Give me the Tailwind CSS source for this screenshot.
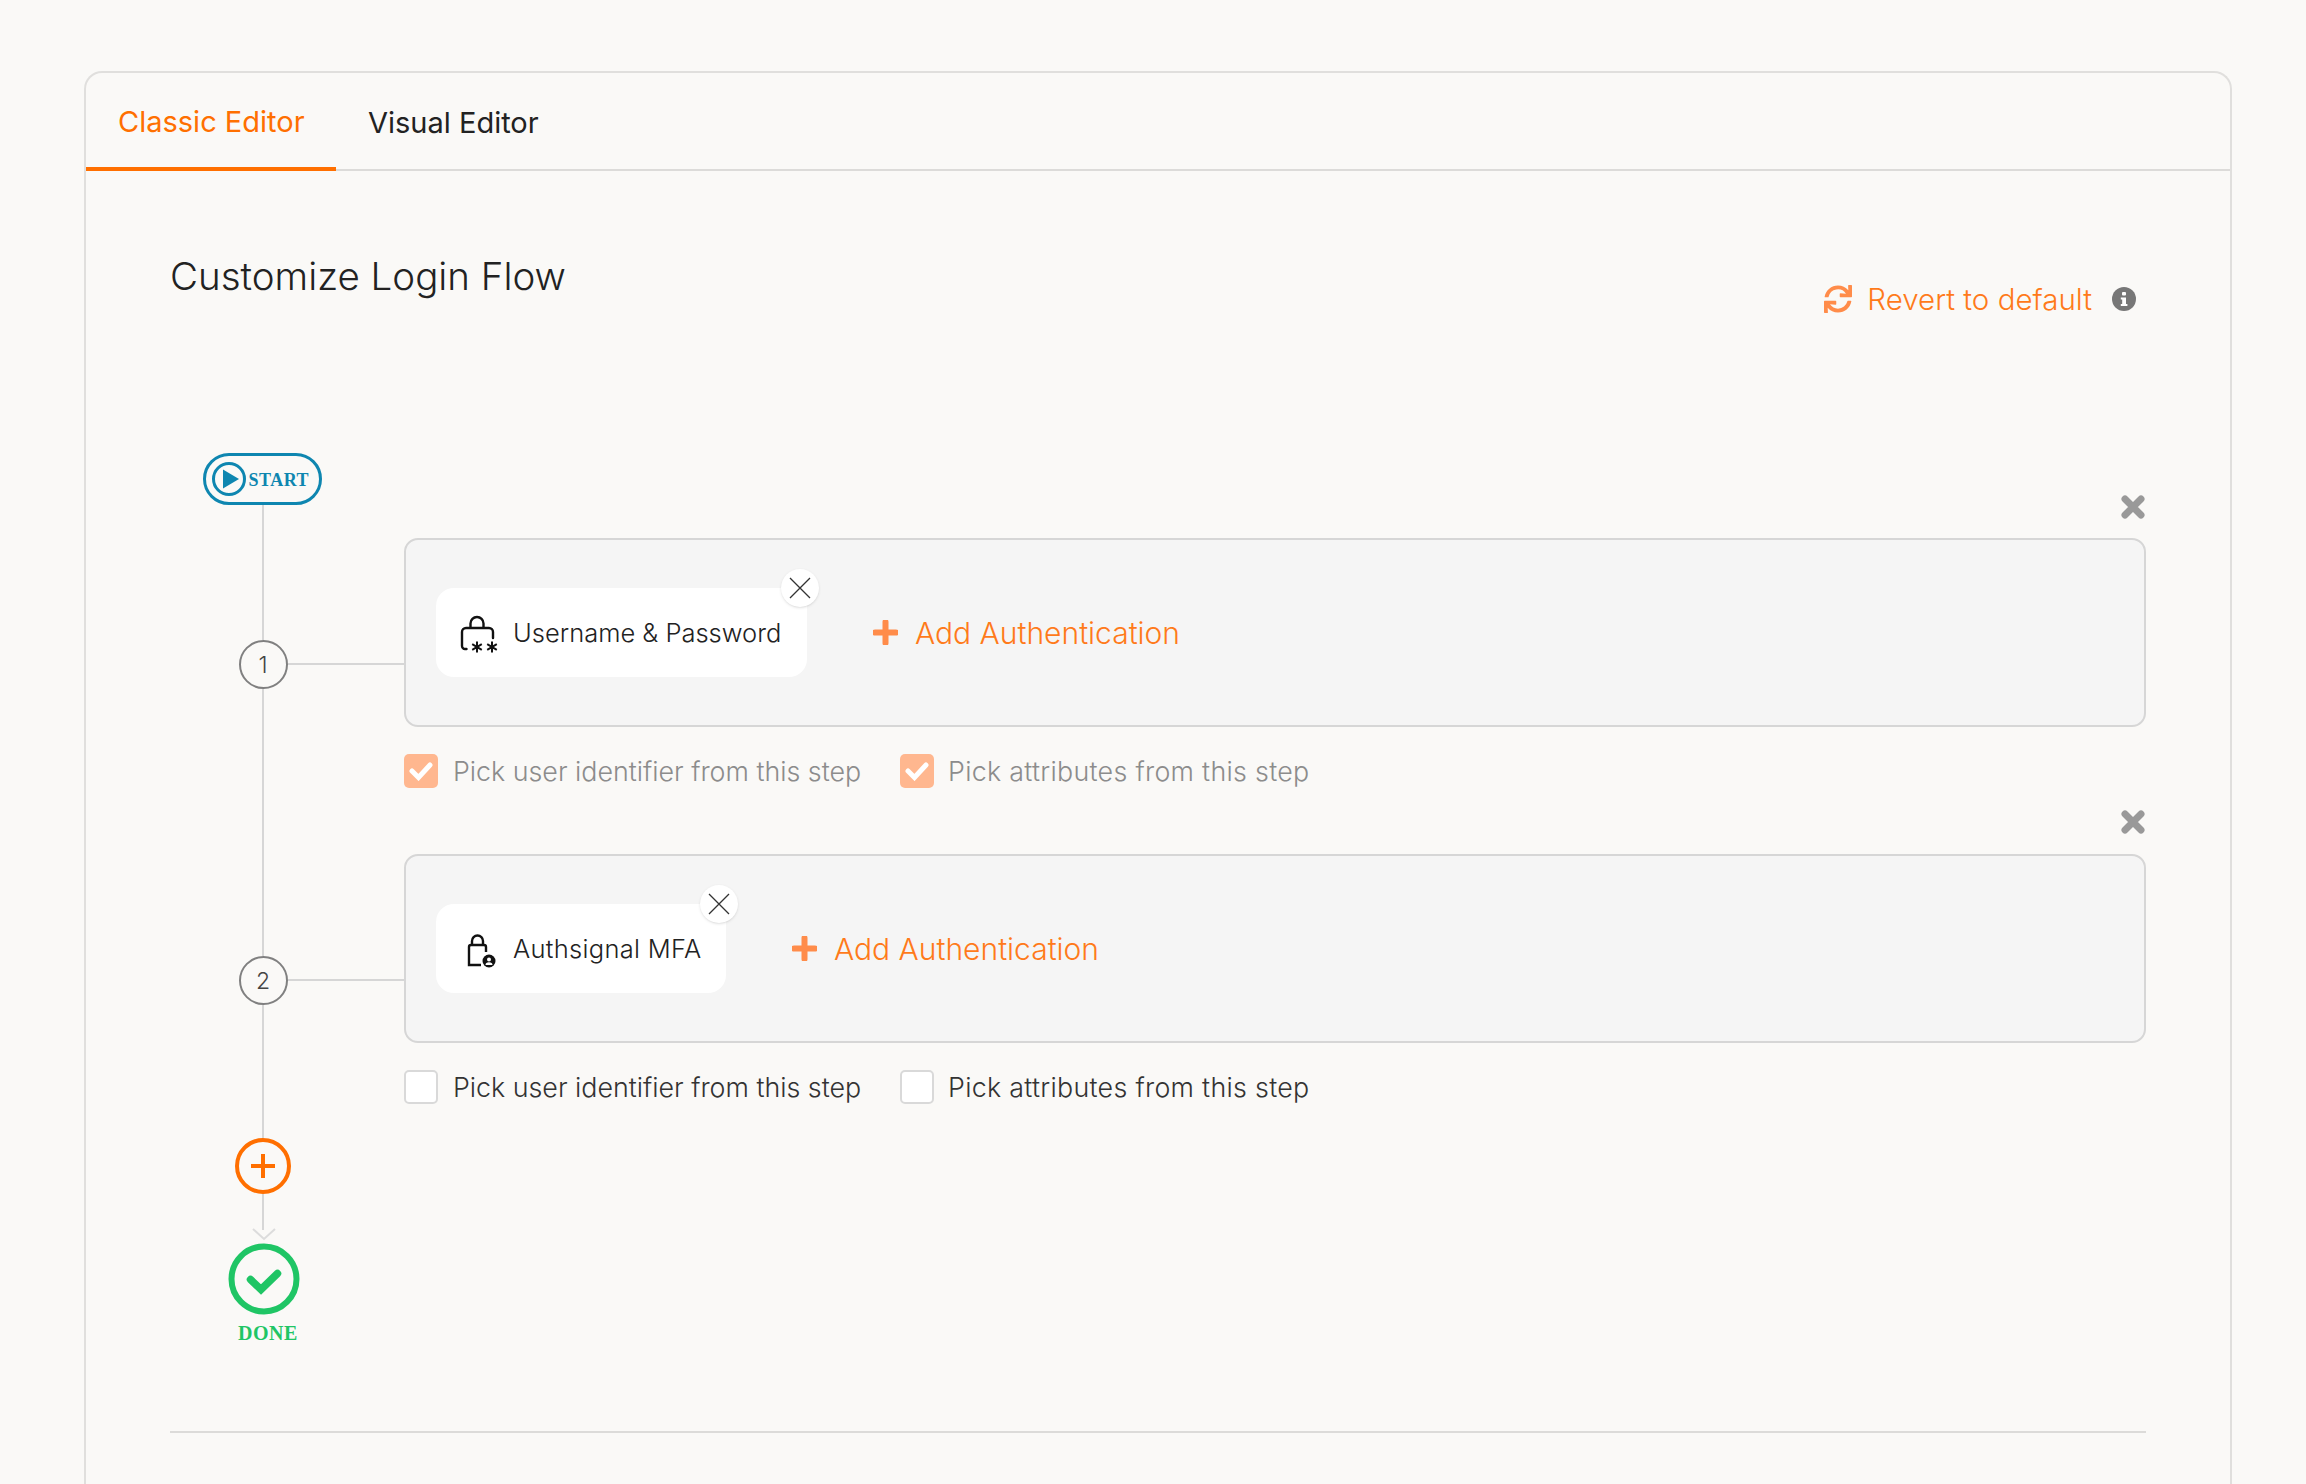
<!DOCTYPE html>
<html lang="en">
<head>
<meta charset="UTF-8">
<title>Customize Login Flow</title>
<script src="https://cdn.jsdelivr.net/npm/@tailwindcss/browser@4"></script>
</head>
<body class="bg-[#faf9f7] h-[1484px] overflow-hidden font-['Inter',sans-serif] font-light text-[#222]">

<div class="ml-[84px] mt-[71px] w-[2148px] h-[1413px] border-2 border-b-0 border-[#e0dfdd] rounded-t-[18px]">

  <!-- tabs -->
  <div class="flex h-[98px] border-b-2 border-[#dcdbd9] text-[29px] font-normal">
    <div class="w-[250px] h-[98px] pl-[32px] pt-[4px] flex items-center text-[#ff6f00] border-b-4 border-[#ff6f00]">Classic Editor</div>
    <div class="pl-[32px] pt-[2px] flex items-center h-[98px]">Visual Editor</div>
  </div>

  <div class="px-[84px]">
    <div class="flex justify-between items-start pt-[80px] h-[282px]">
      <h1 class="text-[38.5px] leading-[50px]">Customize Login Flow</h1>
      <div class="flex items-center text-[#ff7a1a] text-[29.5px] mr-[10px] mt-[26px]">
        <svg class="w-[28px] h-[28px] fill-[#ff8c4a]" viewBox="0 0 512 512"><path d="M440.65 12.57l4 82.77A247.16 247.16 0 0 0 255.83 8C134.73 8 33.91 94.92 12.29 209.82A12 12 0 0 0 24.09 224h49.05a12 12 0 0 0 11.67-9.26 175.91 175.91 0 0 1 317-56.94l-101.46-4.86a12 12 0 0 0-12.57 12v47.41a12 12 0 0 0 12 12H500a12 12 0 0 0 12-12V12a12 12 0 0 0-12-12h-47.37a12 12 0 0 0-11.98 12.57zM255.83 432a175.61 175.61 0 0 1-146-77.8l101.8 4.87a12 12 0 0 0 12.57-12v-47.4a12 12 0 0 0-12-12H12a12 12 0 0 0-12 12V500a12 12 0 0 0 12 12h47.35a12 12 0 0 0 12-12.6l-4.15-82.57A247.17 247.17 0 0 0 255.83 504c121.11 0 221.93-86.92 243.55-201.82a12 12 0 0 0-11.8-14.18h-49.05a12 12 0 0 0-11.67 9.26A175.86 175.86 0 0 1 255.83 432z"/></svg>
        <span class="ml-[15px]">Revert to default</span>
        <svg class="w-[24px] h-[24px] ml-[20px]" viewBox="0 0 24 24"><circle cx="12" cy="12" r="12" fill="#777"/><rect x="10" y="5" width="4" height="3.6" rx="1" fill="#fff"/><path d="M8.8 10.5h5.2v6.5h1.4v2H8.8v-2h1.4v-4.5H8.8z" fill="#fff"/></svg>
      </div>
    </div>

    <div class="flex h-[980px] border-b-2 border-[#dcdbd9]">
      <!-- timeline -->
      <div class="w-[234px] shrink-0">
        <div class="w-[186px] flex flex-col items-center">
          <div class="w-[119px] h-[52px] mr-[2px] rounded-full border-[3px] border-[#0e86b0] flex items-center pl-[5px] text-[#0e86b0]">
            <svg class="w-[36px] h-[36px]" viewBox="0 0 36 36"><circle cx="18" cy="18" r="15.5" fill="none" stroke="#0e86b0" stroke-width="3"/><path d="M12 8.500 28 18 12 27.500z" fill="#0e86b0"/></svg>
            <span class="font-['Liberation_Serif',serif] font-bold text-[18px] tracking-[0.5px] ml-[2px] pt-[2px]">START</span>
          </div>
          <div class="w-[2px] h-[135px] bg-[#d6d6d6]"></div>
          <div class="relative w-[49px] h-[49px] rounded-full border-2 border-[#808080] bg-[#faf9f7] flex items-center justify-center pt-[2px] text-[23px] text-[#444]">
            1
            <div class="absolute left-[47px] top-[21px] w-[118px] h-[2px] bg-[#d6d6d6]"></div>
          </div>
          <div class="w-[2px] h-[267px] bg-[#d6d6d6]"></div>
          <div class="relative w-[49px] h-[49px] rounded-full border-2 border-[#808080] bg-[#faf9f7] flex items-center justify-center pt-[2px] text-[23px] text-[#444]">
            2
            <div class="absolute left-[47px] top-[21px] w-[118px] h-[2px] bg-[#d6d6d6]"></div>
          </div>
          <div class="w-[2px] h-[133px] bg-[#d6d6d6]"></div>
          <svg class="w-[56px] h-[56px]" viewBox="0 0 56 56"><circle cx="28" cy="28" r="26" fill="none" stroke="#ff6f00" stroke-width="4"/><path d="M28 16v24M16 28h24" stroke="#ff6f00" stroke-width="4"/></svg>
          <div class="w-[2px] h-[36px] bg-[#d6d6d6]"></div>
          <svg class="w-[24px] h-[13px] -mt-[2px] ml-[1px]" viewBox="0 0 24 13"><path d="M1 1l11 10L23 1" fill="none" stroke="#dcdcdc" stroke-width="2"/></svg>
          <svg class="w-[72px] h-[72px] mt-[2px] ml-[2px]" viewBox="0 0 72 72"><circle cx="36" cy="36" r="32.5" fill="none" stroke="#1fc565" stroke-width="6"/><path d="M22.500 36.500l10.500 10 16.500-16" fill="none" stroke="#1fc565" stroke-width="7.500" stroke-linecap="round"/></svg>
          <div class="font-['Liberation_Serif',serif] font-bold text-[20px] tracking-[0.5px] text-[#1fc565] mt-[6px] ml-[10px] leading-[24px]">DONE</div>
        </div>
      </div>

      <!-- steps -->
      <div class="flex-1">
        <div class="h-[85px] pt-[42px] flex justify-end pr-[1px]">
          <svg class="w-[24px] h-[24px]" viewBox="0 0 24 24"><path d="M4 4l16 16M20 4L4 20" stroke="#999" stroke-width="7" stroke-linecap="round"/></svg>
        </div>
        <div class="h-[189px] rounded-[14px] border-2 border-[#d6d6d6] bg-[#f5f5f5] flex items-center pl-[30px]">
          <div class="relative h-[89px] w-[371px] bg-white rounded-[18px] flex items-center pl-[25px] text-[25.5px]">
            <svg class="w-[36px] h-[38px] mt-[4px] shrink-0 overflow-visible" viewBox="0 0 36 38"><path d="M9.500 12V7.500a6.500 6.500 0 0 1 13 0V12" fill="none" stroke="#111" stroke-width="2.400"/><path d="M5.500 33H4a3 3 0 0 1-3-3V16a4 4 0 0 1 4-4h23a4 4 0 0 1 4 4v6" fill="none" stroke="#111" stroke-width="2.400" stroke-linecap="round"/><path d="M16 25.500v11M11.200 28.200l9.600 5.600M20.800 28.200l-9.600 5.600M31 25.500v11M26.200 28.200l9.600 5.600M35.800 28.200l-9.600 5.600" stroke="#111" stroke-width="2"/></svg>
            <span class="ml-[16px] pt-[2px]">Username &amp; Password</span>
            <div class="absolute -top-[19px] -right-[12px] w-[38px] h-[38px] rounded-full bg-white shadow-sm flex items-center justify-center">
              <svg class="w-[22px] h-[22px]" viewBox="0 0 22 22"><path d="M1 1l20 20M21 1L1 21" stroke="#333" stroke-width="1.300"/></svg>
            </div>
          </div>
          <div class="flex items-center ml-[66px] text-[#ff7a1a] text-[30px]">
            <svg class="w-[25px] h-[25px]" viewBox="0 0 25 25"><path d="M12.500 2v21M2 12.500h21" stroke="#ff8c4a" stroke-width="6" stroke-linecap="round"/></svg>
            <span class="ml-[17px] pt-[2px]">Add Authentication</span>
          </div>
        </div>
        <div class="flex items-center mt-[26px] h-[36px] text-[26.8px] text-[#8c8c8c]">
          <div class="w-[34px] h-[34px] rounded-[5px] bg-[#ffb78f] flex items-center justify-center">
            <svg class="w-[24px] h-[20px]" viewBox="0 0 24 20"><path d="M3 10l6.500 6.500L21 4" fill="none" stroke="#fff" stroke-width="5" stroke-linecap="round"/></svg>
          </div>
          <span class="ml-[15px] w-[447px]">Pick user identifier from this step</span>
          <div class="w-[34px] h-[34px] rounded-[5px] bg-[#ffb78f] flex items-center justify-center">
            <svg class="w-[24px] h-[20px]" viewBox="0 0 24 20"><path d="M3 10l6.500 6.500L21 4" fill="none" stroke="#fff" stroke-width="5" stroke-linecap="round"/></svg>
          </div>
          <span class="ml-[14px] tracking-[0.3px]">Pick attributes from this step</span>
        </div>

        <div class="h-[65px] pt-[21px] flex justify-end pr-[1px]">
          <svg class="w-[24px] h-[24px]" viewBox="0 0 24 24"><path d="M4 4l16 16M20 4L4 20" stroke="#999" stroke-width="7" stroke-linecap="round"/></svg>
        </div>
        <div class="h-[189px] rounded-[14px] border-2 border-[#d6d6d6] bg-[#f5f5f5] flex items-center pl-[30px]">
          <div class="relative h-[89px] w-[290px] bg-white rounded-[18px] flex items-center pl-[25px] text-[25.5px]">
            <svg class="w-[36px] h-[38px] shrink-0" viewBox="0 0 36 38"><path d="M11 15v-4a5.500 5.500 0 0 1 11 0v4" fill="none" stroke="#111" stroke-width="2.400"/><path d="M20 35H8V17a2 2 0 0 1 2-2h13a2 2 0 0 1 2 2v5" fill="none" stroke="#111" stroke-width="2.400"/><circle cx="28" cy="31" r="6.500" fill="#111"/><circle cx="28" cy="29.500" r="2" fill="#fff"/><path d="M24.500 35a3.500 2.800 0 0 1 7 0z" fill="#fff"/></svg>
            <span class="ml-[16px] pt-[2px] tracking-[0.3px]">Authsignal MFA</span>
            <div class="absolute -top-[19px] -right-[12px] w-[38px] h-[38px] rounded-full bg-white shadow-sm flex items-center justify-center">
              <svg class="w-[22px] h-[22px]" viewBox="0 0 22 22"><path d="M1 1l20 20M21 1L1 21" stroke="#333" stroke-width="1.300"/></svg>
            </div>
          </div>
          <div class="flex items-center ml-[66px] text-[#ff7a1a] text-[30px]">
            <svg class="w-[25px] h-[25px]" viewBox="0 0 25 25"><path d="M12.500 2v21M2 12.500h21" stroke="#ff8c4a" stroke-width="6" stroke-linecap="round"/></svg>
            <span class="ml-[17px] pt-[2px]">Add Authentication</span>
          </div>
        </div>
        <div class="flex items-center mt-[26px] h-[36px] text-[26.8px] text-[#333]">
          <div class="w-[34px] h-[34px] rounded-[5px] bg-white border-2 border-[#d9d9d9]"></div>
          <span class="ml-[15px] w-[447px]">Pick user identifier from this step</span>
          <div class="w-[34px] h-[34px] rounded-[5px] bg-white border-2 border-[#d9d9d9]"></div>
          <span class="ml-[14px] tracking-[0.3px]">Pick attributes from this step</span>
        </div>
      </div>
    </div>
  </div>
</div>

</body>
</html>
